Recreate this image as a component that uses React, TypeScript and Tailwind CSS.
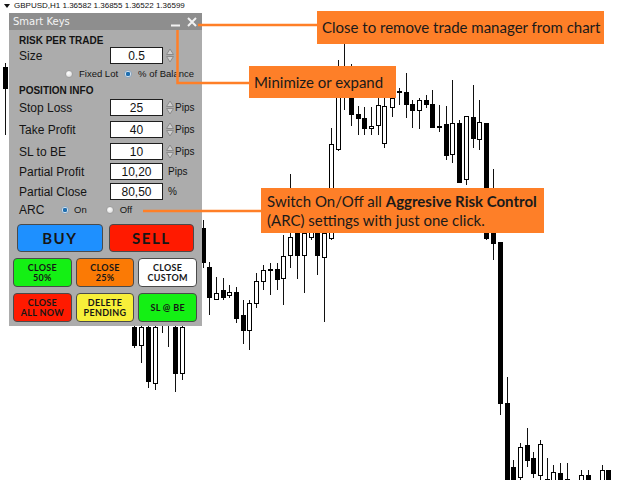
import React from "react";

// x, wick top, body top, body bottom, wick bottom, 1 = bear (black body)
type Candle = [number, number, number, number, number, number];

const candles: Candle[] = [
  [5, 63, 67, 88, 135, 1],
  [134, 320, 327, 345, 348, 1],
  [141, 320, 327, 345, 363, 0],
  [148, 320, 327, 381, 388, 1],
  [155, 320, 327, 383, 390, 0],
  [162, 320, 321, 325, 333, 1],
  [168, 320, 322, 325, 347, 0],
  [175, 320, 327, 373, 392, 1],
  [182, 320, 327, 373, 380, 0],
  [203, 220, 228, 262, 268, 1],
  [209, 262, 267, 297, 315, 1],
  [216, 277, 293, 299, 300, 0],
  [223, 278, 290, 297, 300, 1],
  [229, 285, 292, 295, 298, 0],
  [236, 287, 292, 318, 323, 1],
  [243, 300, 315, 330, 344, 1],
  [249, 300, 303, 330, 350, 0],
  [256, 273, 281, 303, 308, 0],
  [263, 265, 270, 281, 290, 0],
  [270, 263, 269, 270, 295, 1],
  [277, 263, 269, 279, 290, 1],
  [283, 235, 256, 278, 305, 0],
  [290, 174, 237, 255, 268, 0],
  [297, 225, 233, 255, 279, 1],
  [304, 225, 233, 255, 293, 0],
  [311, 225, 228, 237, 240, 0],
  [317, 225, 233, 255, 275, 1],
  [324, 225, 233, 257, 322, 0],
  [331, 128, 144, 238, 240, 0],
  [338, 60, 93, 149, 151, 0],
  [344, 35, 66, 96, 110, 0],
  [351, 64, 98, 114, 126, 1],
  [358, 106, 114, 118, 135, 1],
  [364, 107, 118, 128, 135, 1],
  [371, 107, 126, 128, 135, 0],
  [378, 97, 105, 125, 135, 0],
  [384, 85, 106, 143, 148, 0],
  [392, 89, 98, 107, 117, 0],
  [399, 88, 91, 92, 105, 1],
  [406, 73, 92, 104, 118, 1],
  [412, 100, 104, 110, 128, 1],
  [419, 98, 100, 110, 129, 0],
  [426, 95, 100, 104, 108, 1],
  [432, 90, 104, 127, 128, 1],
  [439, 105, 126, 127, 132, 1],
  [446, 106, 124, 155, 160, 1],
  [452, 80, 123, 154, 163, 0],
  [459, 120, 123, 182, 183, 1],
  [466, 116, 116, 179, 185, 0],
  [473, 85, 117, 138, 148, 1],
  [479, 100, 122, 139, 150, 0],
  [486, 123, 123, 238, 240, 1],
  [493, 169, 233, 243, 260, 1],
  [500, 242, 242, 403, 415, 1],
  [507, 377, 403, 481, 481, 1],
  [513, 460, 467, 481, 481, 1],
  [520, 443, 447, 477, 481, 0],
  [527, 428, 445, 460, 467, 1],
  [533, 452, 458, 473, 478, 1],
  [540, 440, 444, 475, 481, 0],
  [547, 458, 479, 481, 481, 0],
  [553, 465, 472, 481, 481, 0],
  [560, 463, 473, 481, 481, 1],
  [567, 463, 479, 481, 481, 0],
  [581, 470, 475, 481, 481, 0],
  [588, 470, 475, 481, 481, 1],
  [602, 465, 470, 481, 481, 0],
  [608, 470, 470, 481, 481, 1],
];

function Chart() {
  return (
    <svg className="absolute left-0 top-0" width={640} height={480}>
      {candles.map(([x, hi, top, bot, lo, bear], i) => (
        <g key={i}>
          <line x1={x + 0.5} x2={x + 0.5} y1={hi} y2={lo} stroke="#111" strokeWidth={1} />
          <rect
            x={x - 1.5}
            y={top + 0.5}
            width={4}
            height={Math.max(bot - top, 1)}
            fill={bear ? "#000" : "#fff"}
            stroke="#000"
            strokeWidth={1}
          />
        </g>
      ))}
    </svg>
  );
}

function Spin() {
  return (
    <svg width="8" height="15" viewBox="0 0 8 15" className="ml-[3px]">
      <path d="M0.5 6.5 L4 1 L7.5 6.5 Z" fill="#cfcfcf" stroke="#8a8a8a" strokeWidth="1" />
      <path d="M0.5 8.5 L4 14 L7.5 8.5 Z" fill="#cfcfcf" stroke="#8a8a8a" strokeWidth="1" />
    </svg>
  );
}

function Radio({ on }: { on?: boolean }) {
  return on ? (
    <span className="w-[8px] h-[8px] rounded-full border border-[#8aa6c0] bg-[radial-gradient(circle,#1f6fb0_0%,#1f6fb0_45%,#dfe8f0_60%)]" />
  ) : (
    <span className="w-[8px] h-[8px] rounded-full border border-[#a0a0a0] bg-[radial-gradient(circle_at_40%_35%,#ffffff_0%,#e6e6e6_60%,#c8c8c8_100%)]" />
  );
}

function Field({
  label,
  value,
  spin,
  unit,
  className,
}: {
  label: string;
  value: string;
  spin?: boolean;
  unit?: string;
  className: string;
}) {
  return (
    <div className={`flex items-center h-[17px] ${className}`}>
      <span className="w-[91px] text-[12px]">{label}</span>
      <div className="w-[53px] h-[17px] bg-white border border-[#1e1e1e] flex items-center justify-center text-[12px] text-[#111]">
        {value}
      </div>
      {spin && <Spin />}
      {unit && (
        <span className={spin ? "ml-[1px] text-[10px]" : "ml-[5px] text-[10px]"}>{unit}</span>
      )}
    </div>
  );
}

function Btn({ children, className }: { children: React.ReactNode; className: string }) {
  return (
    <div
      className={`flex items-center justify-center text-center rounded-[4px] border border-[#4a4a4a] text-[#161616] font-['Lato',sans-serif] font-bold ${className}`}
    >
      {children}
    </div>
  );
}

function Panel() {
  return (
    <div className="absolute left-[9px] top-[13px] w-[193px] h-[313px] bg-[#acacac] flex flex-col font-['Liberation_Sans',sans-serif] text-[#141414]">
      <div className="h-[17px] bg-[#8e8e8e] flex items-center pl-[4px] pr-[5px] text-[#f4f4f4] text-[10px] font-['DejaVu_Sans',sans-serif]">
        <span>Smart Keys</span>
        <div className="ml-auto flex items-center gap-[7px]">
          <svg width="9" height="10" viewBox="0 0 9 10">
            <path d="M0 8.5 H9" stroke="#f2f2f2" strokeWidth="2" />
          </svg>
          <svg width="10" height="10" viewBox="0 0 10 10">
            <path d="M1 1 L9 9 M9 1 L1 9" stroke="#f2f2f2" strokeWidth="2" />
          </svg>
        </div>
      </div>
      <div className="flex flex-col pl-[10px]">
        <div className="mt-[4px] h-[13px] leading-[13px] text-[10px] font-bold">RISK PER TRADE</div>
        <Field label="Size" value="0.5" spin className="" />
        <div className="h-[20px] flex items-center text-[9.5px]">
          <span className="ml-[46px]" />
          <Radio />
          <span className="ml-[6px]">Fixed Lot</span>
          <span className="ml-[6px]" />
          <Radio on />
          <span className="ml-[6px]">% of Balance</span>
        </div>
        <div className="h-[14px] leading-[14px] text-[10px] font-bold">POSITION INFO</div>
        <Field label="Stop Loss" value="25" spin unit="Pips" className="mt-[1px]" />
        <Field label="Take Profit" value="40" spin unit="Pips" className="mt-[5px]" />
        <Field label="SL to BE" value="10" spin unit="Pips" className="mt-[5px]" />
        <Field label="Partial Profit" value="10,20" unit="Pips" className="mt-[3px]" />
        <Field label="Partial Close" value="80,50" unit="%" className="mt-[3px]" />
        <div className="h-[20px] flex items-center">
          <span className="w-[42px] text-[12px]">ARC</span>
          <Radio on />
          <span className="ml-[5px] text-[9.5px]">On</span>
          <span className="ml-[19px]" />
          <Radio />
          <span className="ml-[6px] text-[9.5px]">Off</span>
        </div>
      </div>
      <div className="mt-[4px] px-[8px] grid grid-cols-2 gap-[6px]">
        <Btn className="h-[28px] bg-[#1e90ff] text-[15px] tracking-[1.5px]">BUY</Btn>
        <Btn className="h-[28px] bg-[#ff1a00] text-[15px] tracking-[1.5px]">SELL</Btn>
      </div>
      <div className="mt-[6px] pl-[4px] pr-[5px] grid grid-cols-3 gap-[4px] text-[9px] leading-[10px] tracking-[0.3px]">
        <Btn className="h-[29px] bg-[#14f014]">
          CLOSE
          <br />
          50%
        </Btn>
        <Btn className="h-[29px] bg-[#fb7a05]">
          CLOSE
          <br />
          25%
        </Btn>
        <Btn className="h-[29px] bg-white">
          CLOSE
          <br />
          CUSTOM
        </Btn>
      </div>
      <div className="mt-[6px] pl-[4px] pr-[5px] grid grid-cols-3 gap-[4px] text-[9px] leading-[10px] tracking-[0.3px]">
        <Btn className="h-[29px] bg-[#ff1a00]">
          CLOSE
          <br />
          ALL NOW
        </Btn>
        <Btn className="h-[29px] bg-[#f7ef3a]">
          DELETE
          <br />
          PENDING
        </Btn>
        <Btn className="h-[29px] bg-[#14f014]">SL @ BE</Btn>
      </div>
    </div>
  );
}

export default function App() {
  return (
    <div className="relative w-[640px] h-[480px] bg-white overflow-hidden">
      <Chart />
      <div className="relative flex items-center h-[11px] pl-[4px] gap-[4px] font-['Liberation_Sans',sans-serif] text-[8px] text-[#111]">
        <svg width="6" height="4" viewBox="0 0 6 4">
          <path d="M0 0 H6 L3 4 Z" fill="#111" />
        </svg>
        <span>GBPUSD,H1 1.36582 1.36855 1.36522 1.36599</span>
      </div>
      <Panel />
      <svg className="absolute left-0 top-0" width={640} height={480}>
        <path d="M198 25 H318" stroke="#ff7f27" strokeWidth="2.5" fill="none" />
        <path d="M177.5 30 V83 H250" stroke="#ff7f27" strokeWidth="2.5" fill="none" />
        <path d="M143 211 H262" stroke="#ff7f27" strokeWidth="2.5" fill="none" />
      </svg>
      <div className="absolute left-[317px] top-[11px] w-[287px] h-[33px] bg-[#fe7f28] flex items-center pl-[5px] whitespace-nowrap font-['Lato',sans-serif] text-[15px] text-[#1a1a1a]">
        Close to remove trade manager from chart
      </div>
      <div className="absolute left-[249px] top-[66px] w-[147px] h-[32px] bg-[#fe7f28] flex items-center pl-[5px] whitespace-nowrap font-['Lato',sans-serif] text-[15px] text-[#1a1a1a]">
        Minimize or expand
      </div>
      <div className="absolute left-[261px] top-[188px] w-[283px] h-[45px] bg-[#fe7f28] flex flex-col justify-center pl-[6px] whitespace-nowrap font-['Lato',sans-serif] text-[15px] leading-[19px] text-[#1a1a1a]">
        <span>
          Switch On/Off all <b>Aggresive Risk Control</b>
        </span>
        <span>(ARC) settings with just one click.</span>
      </div>
    </div>
  );
}
